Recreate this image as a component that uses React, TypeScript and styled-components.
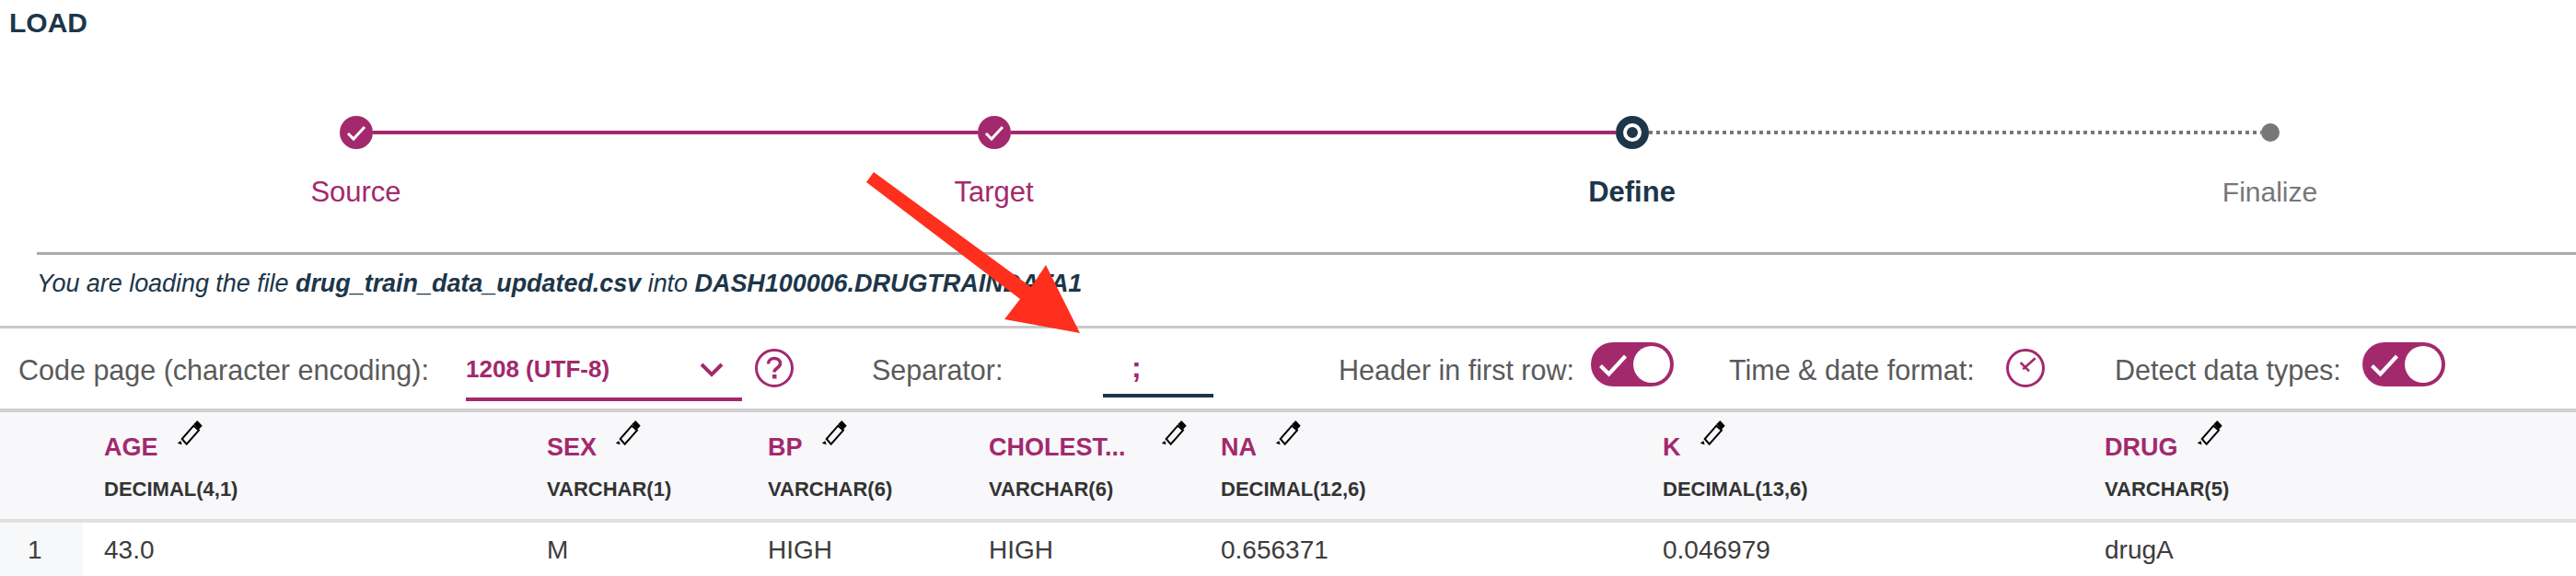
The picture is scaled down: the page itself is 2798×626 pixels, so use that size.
import React from "react"
import styled, { createGlobalStyle } from "styled-components"

const magenta = "#a3296d"
const navy = "#1d3649"
const grey = "#5a5a5a"
const sans = `"Liberation Sans", Arial, sans-serif`

const GlobalStyle = createGlobalStyle`
    html, body {
        margin: 0;
        padding: 0;
        background: #fff;
        overflow: hidden;
    }
`

const Page = styled.div`
    position: relative;
    width: 2798px;
    height: 626px;
    overflow: hidden;
    font-family: ${sans};
`

const Title = styled.h1`
    margin: 0;
    padding: 7px 0 0 10px;
    height: 102px;
    box-sizing: border-box;
    font-size: 30px;
    line-height: 36px;
    font-weight: 700;
    color: ${navy};
`

const Stepper = styled.div`
    display: grid;
    grid-template-columns: repeat(4, 693px);
    width: 2772px;
    padding-left: 40px;
    height: 172px;
`

const Step = styled.div`
    display: flex;
    flex-direction: column;
    align-items: stretch;
    padding-top: 24px;
`

const Track = styled.div`
    display: flex;
    align-items: center;
    height: 36px;
`

type SegmentKind = "none" | "done" | "pending"

const Segment = styled.span<{ $kind: SegmentKind }>`
    flex: 1;
    height: 4px;
    background: ${({ $kind }) =>
        $kind === "done"
            ? magenta
            : $kind === "pending"
            ? "repeating-linear-gradient(to right, #777 0 4px, transparent 4px 8px)"
            : "transparent"};
`

const DoneDot = styled.span`
    width: 36px;
    height: 36px;
    border-radius: 50%;
    background: ${magenta};
    display: flex;
    align-items: center;
    justify-content: center;
`

const CurrentDot = styled.span`
    width: 20px;
    height: 20px;
    box-sizing: border-box;
    border-radius: 50%;
    background: ${navy};
    border: 4px solid #fff;
    box-shadow: 0 0 0 8px ${navy};
    margin: 0 8px;
`

const TodoDot = styled.span`
    width: 20px;
    height: 20px;
    border-radius: 50%;
    background: #777;
`

type StepState = "done" | "current" | "todo"

const StepLabel = styled.div<{ $state: StepState }>`
    margin-top: 29px;
    text-align: center;
    font-size: ${({ $state }) => ($state === "todo" ? 30 : 31)}px;
    line-height: 36px;
    font-weight: ${({ $state }) => ($state === "current" ? 700 : 400)};
    color: ${({ $state }) => ($state === "done" ? magenta : $state === "current" ? navy : "#777")};
`

const Message = styled.div`
    margin-left: 40px;
    border-top: 3px solid #aaa;
    height: 77px;
    font-size: 27px;
    line-height: 40px;
    letter-spacing: -0.05px;
    font-style: italic;
    color: ${navy};

    & p {
        margin: 0;
        padding-top: 11px;
    }
`

const Toolbar = styled.div`
    display: grid;
    grid-template-columns: 486px 314px 127px 251px 256px 274px 150px 301px 118px 269px 1fr;
    align-items: start;
    height: 87px;
    padding-left: 20px;
    border-top: 3px solid #c8c8c8;
`

const FieldLabel = styled.span`
    margin-top: 25px;
    font-size: 30.5px;
    line-height: 40px;
    color: ${grey};
    white-space: nowrap;
`

const SelectBox = styled.div`
    display: flex;
    align-items: center;
    justify-content: space-between;
    box-sizing: border-box;
    width: 300px;
    height: 57px;
    margin-top: 22px;
    padding: 0 20px 8px 0;
    border-bottom: 4px solid ${magenta};
    font-size: 26px;
    font-weight: 700;
    color: ${magenta};
`

const SeparatorBox = styled.div`
    box-sizing: border-box;
    width: 120px;
    height: 53px;
    margin-top: 22px;
    padding: 2px 0 0 31px;
    border-bottom: 4px solid ${navy};
    font-size: 32px;
    line-height: 36px;
    font-weight: 700;
    color: ${magenta};
`

const RoundIcon = styled.svg`
    display: block;
    margin-top: 22px;
`

const Toggle = styled.div`
    display: flex;
    align-items: center;
    justify-content: space-between;
    box-sizing: border-box;
    width: 90px;
    height: 48px;
    margin-top: 15px;
    padding: 4px 4px 4px 6px;
    border-radius: 24px;
    background: ${magenta};

    & span {
        width: 40px;
        height: 40px;
        border-radius: 50%;
        background: #fff;
    }
`

const tableColumns = "90px 481px 240px 240px 252px 480px 480px 1fr"

const HeadRow = styled.div`
    display: grid;
    grid-template-columns: ${tableColumns};
    height: 116px;
    background: #f8f8fb;
    border-top: 4px solid #cfcfd1;
    border-bottom: 4px solid #e0e0e0;
`

const HeadCell = styled.div`
    padding: 9px 0 0 23px;
`

const NameLine = styled.div`
    display: flex;
    align-items: flex-start;
    gap: 20px;
    height: 61px;
`

const ColumnName = styled.span<{ $wide?: boolean }>`
    display: block;
    min-width: ${({ $wide }) => ($wide ? "167px" : "0")};
    margin-top: 14px;
    white-space: nowrap;
    font-size: 27px;
    line-height: 30px;
    font-weight: 700;
    color: ${magenta};
`

const Pencil = styled.svg`
    flex: none;
`

const ColumnType = styled.div`
    font-size: 22px;
    line-height: 28px;
    font-weight: 700;
    color: #333;
`

const DataRow = styled.div`
    display: grid;
    grid-template-columns: ${tableColumns};
    height: 58px;
`

const IndexCell = styled.div`
    background: #f7f8fa;
    padding: 14px 0 0 30px;
    font-size: 28px;
    line-height: 32px;
    color: #3c3c3c;
`

const DataCell = styled.div`
    padding: 14px 0 0 23px;
    font-size: 28px;
    line-height: 32px;
    color: #3c3c3c;
`

const Arrow = styled.svg`
    position: absolute;
    left: 0;
    top: 0;
    pointer-events: none;
`

const Check = ({ size, width }: { size: number; width: number }) => (
    <svg width={size} height={size} viewBox="0 0 24 24" fill="none">
        <path d="M3 13l6 6L21 6" stroke="#fff" strokeWidth={width} />
    </svg>
)

const PencilIcon = () => (
    <Pencil width="28" height="27" viewBox="0 0 28 27">
        <path d="M0.7 24.7L4.3 22L5.7 26.3Z" fill="#000" />
        <path d="M5.7 20L10.7 25.7L24 10.7L18.3 5.7Z" fill="none" stroke="#000" strokeWidth="2" />
        <path d="M18.3 4L22.3 0L27.7 5.7L24 9.7Z" fill="#000" />
    </Pencil>
)

const steps: { label: string; state: StepState; left: SegmentKind; right: SegmentKind }[] = [
    { label: "Source", state: "done", left: "none", right: "done" },
    { label: "Target", state: "done", left: "done", right: "done" },
    { label: "Define", state: "current", left: "done", right: "pending" },
    { label: "Finalize", state: "todo", left: "pending", right: "none" },
]

const columns = [
    { name: "AGE", type: "DECIMAL(4,1)", value: "43.0" },
    { name: "SEX", type: "VARCHAR(1)", value: "M" },
    { name: "BP", type: "VARCHAR(6)", value: "HIGH" },
    { name: "CHOLEST...", type: "VARCHAR(6)", value: "HIGH", wide: true },
    { name: "NA", type: "DECIMAL(12,6)", value: "0.656371" },
    { name: "K", type: "DECIMAL(13,6)", value: "0.046979" },
    { name: "DRUG", type: "VARCHAR(5)", value: "drugA" },
]

const App = () => {
    return (
        <Page>
            <GlobalStyle />
            <Title>LOAD</Title>

            <Stepper>
                {steps.map((step) => (
                    <Step key={step.label}>
                        <Track>
                            <Segment $kind={step.left} />
                            {step.state === "done" && (
                                <DoneDot>
                                    <Check size={24} width={3} />
                                </DoneDot>
                            )}
                            {step.state === "current" && <CurrentDot />}
                            {step.state === "todo" && <TodoDot />}
                            <Segment $kind={step.right} />
                        </Track>
                        <StepLabel $state={step.state}>{step.label}</StepLabel>
                    </Step>
                ))}
            </Stepper>

            <Message>
                <p>
                    You are loading the file <b>drug_train_data_updated.csv</b> into <b>DASH100006.DRUGTRAINDATA1</b>
                </p>
            </Message>

            <Toolbar>
                <FieldLabel>Code page (character encoding):</FieldLabel>
                <SelectBox>
                    1208 (UTF-8)
                    <svg width="26" height="16" viewBox="0 0 26 16" fill="none">
                        <path d="M2 2L13 13L24 2" stroke={magenta} strokeWidth="4" />
                    </svg>
                </SelectBox>
                <RoundIcon width="42" height="42" viewBox="0 0 42 42" fill="none">
                    <circle cx="21" cy="21" r="19.5" stroke={magenta} strokeWidth="3" />
                    <path d="M14.5 16.5c0-4 3-6 6.5-6s6.5 2 6.5 5.5c0 5-6.5 5-6.5 9.5" stroke={magenta} strokeWidth="3.5" />
                    <rect x="19" y="28" width="4.5" height="4.5" fill={magenta} />
                </RoundIcon>
                <FieldLabel>Separator:</FieldLabel>
                <SeparatorBox>;</SeparatorBox>
                <FieldLabel>Header in first row:</FieldLabel>
                <Toggle>
                    <Check size={36} width={2.8} />
                    <span />
                </Toggle>
                <FieldLabel>Time &amp; date format:</FieldLabel>
                <RoundIcon width="42" height="42" viewBox="0 0 42 42" fill="none">
                    <circle cx="21" cy="21" r="19.5" stroke={magenta} strokeWidth="3" />
                    <path d="M15.7 15L25 24.3M18.3 22.3L31.7 10.3" stroke={magenta} strokeWidth="2.5" />
                </RoundIcon>
                <FieldLabel>Detect data types:</FieldLabel>
                <Toggle>
                    <Check size={36} width={2.8} />
                    <span />
                </Toggle>
            </Toolbar>

            <HeadRow>
                <div />
                {columns.map((column) => (
                    <HeadCell key={column.name}>
                        <NameLine>
                            <ColumnName $wide={column.wide}>{column.name}</ColumnName>
                            <PencilIcon />
                        </NameLine>
                        <ColumnType>{column.type}</ColumnType>
                    </HeadCell>
                ))}
            </HeadRow>

            <DataRow>
                <IndexCell>1</IndexCell>
                {columns.map((column) => (
                    <DataCell key={column.name}>{column.value}</DataCell>
                ))}
            </DataRow>

            <Arrow width="2798" height="626" viewBox="0 0 2798 626">
                <polygon points="949,187 941,198 1108,325 1091,347 1173,362 1136,288 1120,312" fill="#ff2f1e" />
            </Arrow>
        </Page>
    )
}

export default App
